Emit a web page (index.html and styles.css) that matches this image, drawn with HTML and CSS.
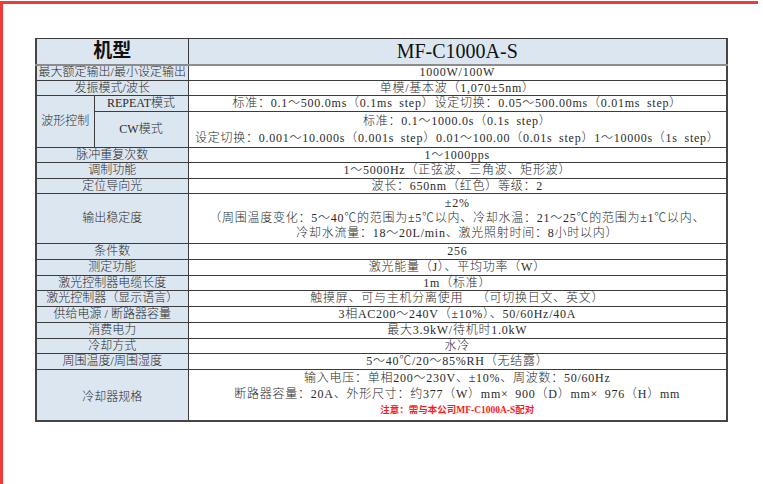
FILE: index.html
```html
<!DOCTYPE html>
<html lang="zh-CN">
<head>
<meta charset="utf-8">
<title>MF-C1000A-S</title>
<link rel="stylesheet" href="styles.css">
</head>
<body>
<div class="frame">
<table class="spec">
<colgroup><col class="c1"><col class="c2"><col class="c3"></colgroup>
<tr class="head"><th colspan="2" class="lbl title">机型</th><th class="val model">MF-C1000A-S</th></tr>
<tr class="h16"><td colspan="2" class="lbl">最大额定输出/最小设定输出</td><td class="val">1000W/100W</td></tr>
<tr class="h15"><td colspan="2" class="lbl">发振模式/波长</td><td class="val">单模/基本波（1,070±5nm）</td></tr>
<tr class="h16"><td rowspan="2" class="lbl">波形控制</td><td class="lbl">REPEAT模式</td><td class="val">标准：0.1～500.0ms（0.1ms step）设定切换：0.05～500.00ms（0.01ms step）</td></tr>
<tr class="cw"><td class="lbl">CW模式</td><td class="val two">标准：0.1～1000.0s（0.1s step）<br>设定切换：0.001～10.000s（0.001s step）0.01～100.00（0.01s step）1～10000s（1s step）</td></tr>
<tr class="h15"><td colspan="2" class="lbl">脉冲重复次数</td><td class="val">1～1000pps</td></tr>
<tr class="h16"><td colspan="2" class="lbl">调制功能</td><td class="val">1～5000Hz（正弦波、三角波、矩形波）</td></tr>
<tr class="h15"><td colspan="2" class="lbl">定位导向光</td><td class="val">波长：650nm（红色）等级：2</td></tr>
<tr class="stab"><td colspan="2" class="lbl">输出稳定度</td><td class="val three">±2%<br>（周围温度变化：5～40℃的范围为±5℃以内、冷却水温：21～25℃的范围为±1℃以内、<br>冷却水流量：18～20L/min、激光照射时间：8小时以内）</td></tr>
<tr class="h16"><td colspan="2" class="lbl">条件数</td><td class="val">256</td></tr>
<tr class="h16"><td colspan="2" class="lbl">测定功能</td><td class="val">激光能量（J）、平均功率（W）</td></tr>
<tr class="h15"><td colspan="2" class="lbl">激光控制器电缆长度</td><td class="val">1m（标准）</td></tr>
<tr class="h16"><td colspan="2" class="lbl">激光控制器（显示语言）</td><td class="val">触摸屏、可与主机分离使用 　（可切换日文、英文）</td></tr>
<tr class="h16"><td colspan="2" class="lbl">供给电源 / 断路器容量</td><td class="val">3相AC200～240V（±10%）、50/60Hz/40A</td></tr>
<tr class="h16"><td colspan="2" class="lbl">消费电力</td><td class="val">最大3.9kW/待机时1.0kW</td></tr>
<tr class="h15"><td colspan="2" class="lbl">冷却方式</td><td class="val">水冷</td></tr>
<tr class="h16"><td colspan="2" class="lbl">周围温度/周围湿度</td><td class="val">5～40℃/20～85%RH（无结露）</td></tr>
<tr class="cool"><td colspan="2" class="lbl cool-lbl">冷却器规格</td><td class="val cooler">输入电压：单相200～230V、±10%、周波数：50/60Hz<br>断路器容量：20A、外形尺寸：约377（W）mm× 900（D）mm× 976（H）mm<span class="note">注意：需与本公司MF-C1000A-S配对</span></td></tr>
</table>
</div>
</body>
</html>
```
FILE: styles.css
```css
html, body {
  margin: 0;
  padding: 0;
  background: #ffffff;
}
body {
  width: 763px;
  height: 484px;
  overflow: hidden;
}
.frame {
  box-sizing: border-box;
  width: 758px;
  height: 483px;
  margin-top: 1px;
  border-top: 3px solid #f03a3a;
  border-left: 3px solid #f03a3a;
  padding: 34px 0 0 32px;
}
.spec {
  border-collapse: collapse;
  table-layout: fixed;
  width: 691px;
  font-family: "Liberation Serif", "Noto Sans CJK SC", serif;
  font-size: 12px;
  color: #2a2a2a;
  border: 2px solid #454545;
  border-top: 1px solid #8a8a8a;
}
.c1 { width: 58px; }
.c2 { width: 94px; }
.c3 { width: 539px; }
.spec th, .spec td {
  border: 1px solid #3c3c3c;
  padding: 0;
  text-align: center;
  vertical-align: middle;
  white-space: nowrap;
  overflow: hidden;
}
.lbl {
  background: #dce6f1;
  line-height: 13px;
  font-weight: 300;
}
.spec .cool-lbl {
  padding-top: 6px;
}
.val {
  background: #ffffff;
  letter-spacing: 0.75px;
  word-spacing: 3px;
  line-height: 13px;
  font-weight: 300;
}
.spec .head th {
  border-bottom: 2px solid #8c8c8c;
  background: #dce6f1;
}
.head { height: 26px; }
.h16 { height: 16px; }
.h15 { height: 15px; }
.cw { height: 36px; }
.stab { height: 50px; }
.cool { height: 51px; }
.title {
  font-size: 19px;
  font-weight: bold;
  color: #111;
  line-height: 22px;
}
.model {
  font-size: 20px;
  letter-spacing: 0;
  color: #111;
  line-height: 22px;
}
.two { line-height: 17px; }
.three { line-height: 15px; }
.cooler { line-height: 16px; }
.note {
  display: block;
  line-height: 17px;
  color: #ff1a1a;
  font-size: 9.5px;
  letter-spacing: 0;
  word-spacing: 0;
  font-weight: bold;
}
```
